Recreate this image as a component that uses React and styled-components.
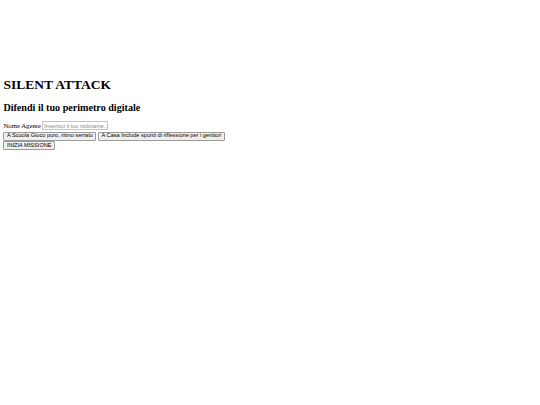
import styled, { createGlobalStyle } from 'styled-components'

const Global = createGlobalStyle`
    html, body {
        margin: 0;
        padding: 0;
        background: #fff;
    }
    body {
        padding: 3.4px;
        font-family: "Liberation Serif", "Times New Roman", serif;
        font-size: 6.75px;
        color: #000;
    }
`

const Schermo = styled.div`
    width: 126.6px;
    height: 64.7px;
    margin-bottom: 1.7px;
`

const Titolo = styled.h1`
    font-size: 13.5px;
    font-weight: bold;
    margin: 9px 0;
    line-height: normal;
`

const Sottotitolo = styled.h2`
    font-size: 10.125px;
    font-weight: bold;
    margin: 8.4px 0;
    line-height: normal;
`

const Riga = styled.div`
    display: flex;
    align-items: center;
    gap: 1.7px;
    line-height: normal;
`

const Etichetta = styled.label`
    font-size: 6.75px;
`

const Campo = styled.input`
    width: 66px;
    height: 8.4px;
    box-sizing: border-box;
    padding: 0 0.9px;
    font-family: "Liberation Sans", Arial, sans-serif;
    font-size: 5.63px;
    border: 0.8px solid #c4c4c4;
    border-radius: 0.8px;
    outline: none;
    &::placeholder {
        color: #8a8a8a;
    }
`

const Bottoni = styled.div`
    display: flex;
    gap: 1.7px;
    margin-top: ${p => p.$spazio}px;
`

const Bottone = styled.button`
    height: 9px;
    box-sizing: border-box;
    padding: 0 2.5px;
    font-family: "Liberation Sans", Arial, sans-serif;
    font-size: 5.63px;
    color: #000;
    background: #efefef;
    border: 0.8px solid #9a9a9a;
    border-radius: 1px;
    line-height: 1;
    white-space: nowrap;
`

export default function App() {
    return (
        <>
            <Global />
            <Schermo />
            <Titolo>SILENT ATTACK</Titolo>
            <Sottotitolo>Difendi il tuo perimetro digitale</Sottotitolo>
            <Riga>
                <Etichetta>Nome Agente</Etichetta>
                <Campo placeholder="Inserisci il tuo nickname..." />
            </Riga>
            <Bottoni $spazio={1.8}>
                <Bottone>A Scuola Gioco puro, ritmo serrato</Bottone>
                <Bottone>A Casa Include spunti di riflessione per i genitori</Bottone>
            </Bottoni>
            <Bottoni $spazio={0.2}>
                <Bottone>INIZIA MISSIONE</Bottone>
            </Bottoni>
        </>
    )
}
